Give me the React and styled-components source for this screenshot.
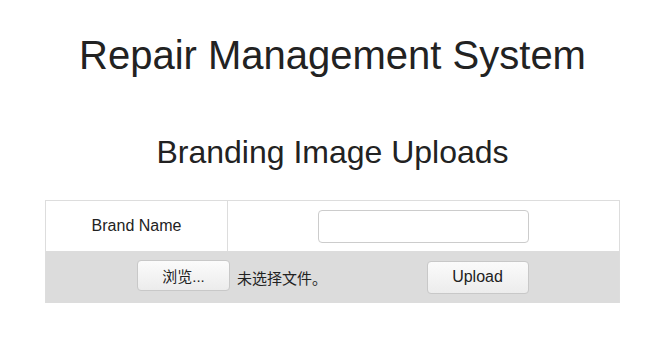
import React from 'react';
import styled, { createGlobalStyle } from 'styled-components';

const GlobalStyle = createGlobalStyle`
    body {
        margin: 0;
        background: #fff;
        color: #222;
        font-family: "Liberation Sans", Arial, "Noto Sans CJK SC", sans-serif;
    }
`;

const Page = styled.div`
    padding: 0 34px 0 45px;
`;

const Title = styled.h1`
    margin: 33px 0 0;
    font-size: 40px;
    font-weight: 400;
    line-height: 44px;
    text-align: center;
`;

const SubTitle = styled.h2`
    margin: 58px 0 0;
    font-size: 32px;
    font-weight: 400;
    line-height: 35px;
    text-align: center;
`;

const Table = styled.div`
    margin-top: 30px;
    border: 1px solid #ddd;
    border-bottom: none;
`;

const Row = styled.div`
    display: grid;
    grid-template-columns: ${p => p.$cols};
    height: ${p => p.$height}px;
    background: ${p => p.$bg || '#fff'};
`;

const Cell = styled.div`
    display: flex;
    align-items: center;
    justify-content: ${p => p.$justify || 'center'};
    padding-left: ${p => p.$padLeft || 0}px;
    border-right: ${p => (p.$divider ? '1px solid #ddd' : 'none')};
    font-size: 16px;
`;

const TextInput = styled.input`
    box-sizing: border-box;
    width: 211px;
    height: 33px;
    border: 1px solid #ccc;
    border-radius: 4px;
    background: #fff;
    font: inherit;
    outline: none;
`;

const Button = styled.button`
    box-sizing: border-box;
    width: ${p => p.$width}px;
    height: ${p => p.$height}px;
    margin-top: ${p => p.$offset || 0}px;
    border: 1px solid #c8c8c8;
    border-radius: 4px;
    background: linear-gradient(#fbfbfb, #ececec);
    color: #222;
    font-family: "Liberation Sans", Arial, "Noto Sans CJK SC", sans-serif;
    font-size: ${p => p.$size || 16}px;
    padding: 0;
`;

const FileName = styled.span`
    margin-left: 7px;
    font-size: 15px;
    font-family: "Noto Sans CJK SC", sans-serif;
`;

export default function App() {
    return (
        <Page>
            <GlobalStyle />
            <Title>Repair Management System</Title>
            <SubTitle>Branding Image Uploads</SubTitle>
            <Table>
                <Row $cols="182px 1fr" $height={50}>
                    <Cell $divider>Brand Name</Cell>
                    <Cell><TextInput type="text" /></Cell>
                </Row>
                <Row $cols="290px 1fr" $height={52} $bg="#dcdcdc">
                    <Cell $justify="flex-start" $padLeft={91}>
                        <Button $width={93} $height={31} $size={15} $offset={-3}>浏览...</Button>
                        <FileName>未选择文件。</FileName>
                    </Cell>
                    <Cell>
                        <Button $width={102} $height={33}>Upload</Button>
                    </Cell>
                </Row>
            </Table>
        </Page>
    );
}
